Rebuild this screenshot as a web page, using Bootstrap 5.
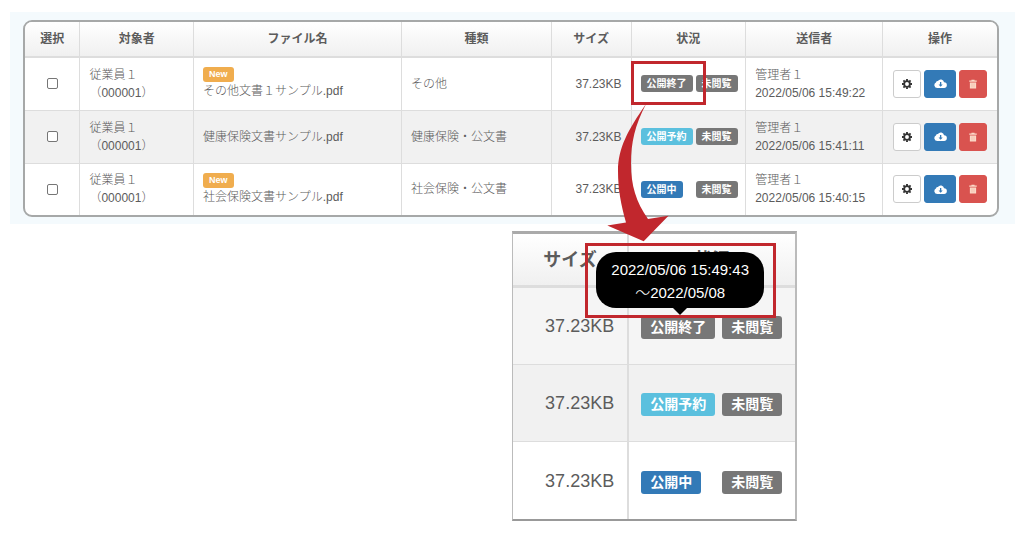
<!DOCTYPE html>
<html lang="ja">
<head>
<meta charset="utf-8">
<meta name="viewport" content="width=device-width, initial-scale=1">
<title>文書一覧</title>
<link href="https://cdn.jsdelivr.net/npm/bootstrap@5.3.0/dist/css/bootstrap.min.css" rel="stylesheet">
<style>
  body { font-family: "Liberation Sans", "Noto Sans CJK JP", sans-serif; font-weight: 300; font-size: 12px; line-height: 18px; color: #5c5c5c; background: #fff; }
  .list-panel { background: #f4fafd; margin: 12px 9px 0 10px; padding: 8px 16px 7px 13px; }
  .list-frame { border: 2px solid #a6a8a8; border-radius: 9px; background: #fff; }
  .grid-table { width: 100%; table-layout: fixed; border-collapse: separate; border-spacing: 0; margin: 0; }
  .grid-table th { font-weight: 700; text-align: center; color: #5c5c5c; background: linear-gradient(#fff, #f0f0f0); border-bottom: 2px solid #ddd; border-right: 1px solid #ddd; height: 36px; padding: 0; }
  .grid-table td { border-right: 1px solid #ddd; border-bottom: 1px solid #ddd; height: 53px; padding: 7px 9px 8px; vertical-align: middle; }
  .grid-table th:last-child, .grid-table td:last-child { border-right: 0; }
  .grid-table tr:last-child td { border-bottom: 0; height: 51px; }
  .grid-table th:first-child { border-top-left-radius: 7px; }
  .grid-table th:last-child { border-top-right-radius: 7px; }
  .list-frame tbody tr:nth-child(2) { background: #f1f1f1; }
  .grid-table input { appearance: none; width: 11px; height: 11px; border: 1px solid #767676; border-radius: 2px; background: #fff; display: block; margin: 0 auto; }
  .grid-table input:checked { background: #337ab7; }
  .tag { display: block; font-weight: 700; color: #fff; background: #777; border-radius: 3px; font-size: 10px; line-height: 17px; padding: 0 6px; white-space: nowrap; width: max-content; }
  .tag-info { background: #5bc0de; }
  .tag-primary { background: #337ab7; }
  .tag-new { background: #f0ad4e; font-size: 9px; line-height: 15px; }
  .status-pair { display: grid; grid-template-columns: 52px 42px; gap: 3px; position: relative; }
  .tools { gap: 3px; padding-left: 1px; }
  .tool { height: 28px; width: 28px; padding: 0; border-radius: 3px; display: flex; align-items: center; justify-content: center; }
  .tool-set { background: #fff; border: 1px solid #ccc; color: #333; }
  .tool-get { background: #337ab7; border-color: #337ab7; color: #fff; width: 32px; }
  .tool-del { background: #d9534f; border-color: #d9534f; color: #fbd9c8; }
  .marker { position: absolute; border: 3px solid #c1272d; pointer-events: none; z-index: 3; }
  .marker-list { left: -10px; top: -14px; width: 75px; height: 44px; }
  .arrow { position: absolute; left: -34px; top: 29px; z-index: 3; pointer-events: none; }
  .detail { width: 285px; margin-top: 7px; border: 1px solid #bbb; border-right-width: 2px; border-top: 3px solid #aaa; border-bottom: 2px solid #999; font-size: 18px; }
  .detail .grid-table th { height: 54px; border-bottom-width: 3px; }
  .detail .grid-table td, .detail .grid-table tr:last-child td { height: 77px; padding: 0 13px 0 12px; }
  .detail th:first-child, .detail td:first-child { border-right-width: 2px !important; }
  .detail th { border-radius: 0 !important; }
  .detail tbody tr:nth-child(1) { background: #f5f5f5; }
  .detail tbody tr:nth-child(2) { background: #f1f1f1; }
  .detail .status-pair { grid-template-columns: 75px 61px; gap: 6px; margin-top: 3px; }
  .detail .tag { font-size: 14px; line-height: 23px; padding: 0 9px; }
  .period { position: absolute; left: -45px; top: -64px; width: 168px; height: 56px; padding: 6px 0; border-radius: 20px; background: #000; color: #fff; font-size: 15px; line-height: 23px; text-align: center; z-index: 2; white-space: nowrap; }
  .period::after { content: ""; position: absolute; left: 77px; top: 56px; border: 7px solid transparent; border-bottom: 0; border-top-color: #000; }
  .marker-detail { left: -56px; top: -73px; width: 191px; height: 75px; }
</style>
</head>
<body>
<svg class="d-none" aria-hidden="true">
  <symbol id="gear" viewBox="0 0 16 16"><g fill="none" stroke="currentColor"><circle cx="8" cy="8" r="4.600" stroke-width="3"/><path stroke-width="3" d="M8 0v3M8 13v3M0 8h3M13 8h3M2.300 2.300l2.200 2.200M11.500 11.500l2.200 2.200M2.300 13.700l2.200-2.200M11.500 4.500l2.200-2.200"/></g></symbol>
  <symbol id="cloud" viewBox="0 0 20 16"><path fill="currentColor" fill-rule="evenodd" d="M5 15a4.500 4.500 0 0 1-2-8.500A3 3 0 0 1 6 4.200 5.200 5.200 0 0 1 15.500 6 4.500 4.500 0 0 1 15 15zM9.200 5.500v4H7l3.200 3.500 3.200-3.500h-2.200v-4z"/></symbol>
  <symbol id="trash" viewBox="0 0 16 16"><path fill="currentColor" fill-rule="evenodd" d="M5.500 2.500V1h5v1.500H14v2H2v-2zM3 5.500h10V15H3z"/><path stroke="#f3b8a5" stroke-width=".8" d="M6 7v6.500M8 7v6.500M10 7v6.500"/></symbol>
</svg>

<main>
  <section class="list-panel">
    <div class="list-frame">
      <table class="grid-table">
        <colgroup>
          <col style="width:5.7%"><col style="width:11.7%"><col style="width:21.4%"><col style="width:15.4%"><col style="width:8.2%"><col style="width:11.8%"><col style="width:14.1%"><col style="width:11.7%">
        </colgroup>
        <thead>
          <tr><th>選択</th><th>対象者</th><th>ファイル名</th><th>種類</th><th>サイズ</th><th>状況</th><th>送信者</th><th>操作</th></tr>
        </thead>
        <tbody>
          <tr>
            <td><input type="checkbox" aria-label="その他文書１サンプル.pdfを選択"></td>
            <td>従業員１<br>（000001）</td>
            <td><span class="tag tag-new">New</span>その他文書１サンプル.pdf</td>
            <td>その他</td>
            <td class="text-end">37.23KB</td>
            <td>
              <div class="status-pair">
                <span class="tag">公開終了</span><span class="tag">未閲覧</span>
                <span class="marker marker-list"></span>
                <svg class="arrow" width="62" height="138" viewBox="607 105 62 138" aria-hidden="true"><path fill="#c1272d" d="M646 105C628 131 618 149 618 172C618 190 621 206 626 223.500L607.300 226.500L643.700 242.300L668.500 216.700L648 220C636 203 631 186 631 165C631 143 635 126 646 105Z"/></svg>
              </div>
            </td>
            <td>管理者１<br>2022/05/06 15:49:22</td>
            <td><div class="d-flex tools">
              <button type="button" class="btn tool tool-set" aria-label="設定"><svg width="10" height="10"><use href="#gear"/></svg></button>
              <button type="button" class="btn tool tool-get" aria-label="ダウンロード"><svg width="13" height="11"><use href="#cloud"/></svg></button>
              <button type="button" class="btn tool tool-del" aria-label="削除"><svg width="10" height="10"><use href="#trash"/></svg></button>
            </div></td>
          </tr>
          <tr>
            <td><input type="checkbox" aria-label="健康保険文書サンプル.pdfを選択"></td>
            <td>従業員１<br>（000001）</td>
            <td>健康保険文書サンプル.pdf</td>
            <td>健康保険・公文書</td>
            <td class="text-end">37.23KB</td>
            <td><div class="status-pair"><span class="tag tag-info">公開予約</span><span class="tag">未閲覧</span></div></td>
            <td>管理者１<br>2022/05/06 15:41:11</td>
            <td><div class="d-flex tools">
              <button type="button" class="btn tool tool-set" aria-label="設定"><svg width="10" height="10"><use href="#gear"/></svg></button>
              <button type="button" class="btn tool tool-get" aria-label="ダウンロード"><svg width="13" height="11"><use href="#cloud"/></svg></button>
              <button type="button" class="btn tool tool-del" aria-label="削除"><svg width="10" height="10"><use href="#trash"/></svg></button>
            </div></td>
          </tr>
          <tr>
            <td><input type="checkbox" aria-label="社会保険文書サンプル.pdfを選択"></td>
            <td>従業員１<br>（000001）</td>
            <td><span class="tag tag-new">New</span>社会保険文書サンプル.pdf</td>
            <td>社会保険・公文書</td>
            <td class="text-end">37.23KB</td>
            <td><div class="status-pair"><span class="tag tag-primary">公開中</span><span class="tag">未閲覧</span></div></td>
            <td>管理者１<br>2022/05/06 15:40:15</td>
            <td><div class="d-flex tools">
              <button type="button" class="btn tool tool-set" aria-label="設定"><svg width="10" height="10"><use href="#gear"/></svg></button>
              <button type="button" class="btn tool tool-get" aria-label="ダウンロード"><svg width="13" height="11"><use href="#cloud"/></svg></button>
              <button type="button" class="btn tool tool-del" aria-label="削除"><svg width="10" height="10"><use href="#trash"/></svg></button>
            </div></td>
          </tr>
        </tbody>
      </table>
    </div>
  </section>

  <div class="row g-0">
    <section class="col-6 offset-6">
      <div class="detail">
        <table class="grid-table">
          <colgroup><col style="width:41.2%"><col></colgroup>
          <thead><tr><th>サイズ</th><th>状況</th></tr></thead>
          <tbody>
            <tr>
              <td class="text-end">37.23KB</td>
              <td><div class="status-pair">
                <span class="tag">公開終了</span><span class="tag">未閲覧</span>
                <div class="period" role="tooltip">2022/05/06 15:49:43<br>～2022/05/08</div>
                <span class="marker marker-detail"></span>
              </div></td>
            </tr>
            <tr><td class="text-end">37.23KB</td><td><div class="status-pair"><span class="tag tag-info">公開予約</span><span class="tag">未閲覧</span></div></td></tr>
            <tr><td class="text-end">37.23KB</td><td><div class="status-pair"><span class="tag tag-primary">公開中</span><span class="tag">未閲覧</span></div></td></tr>
          </tbody>
        </table>
      </div>
    </section>
  </div>
</main>
<script src="https://cdn.jsdelivr.net/npm/bootstrap@5.3.0/dist/js/bootstrap.bundle.min.js"></script>
</body>
</html>
